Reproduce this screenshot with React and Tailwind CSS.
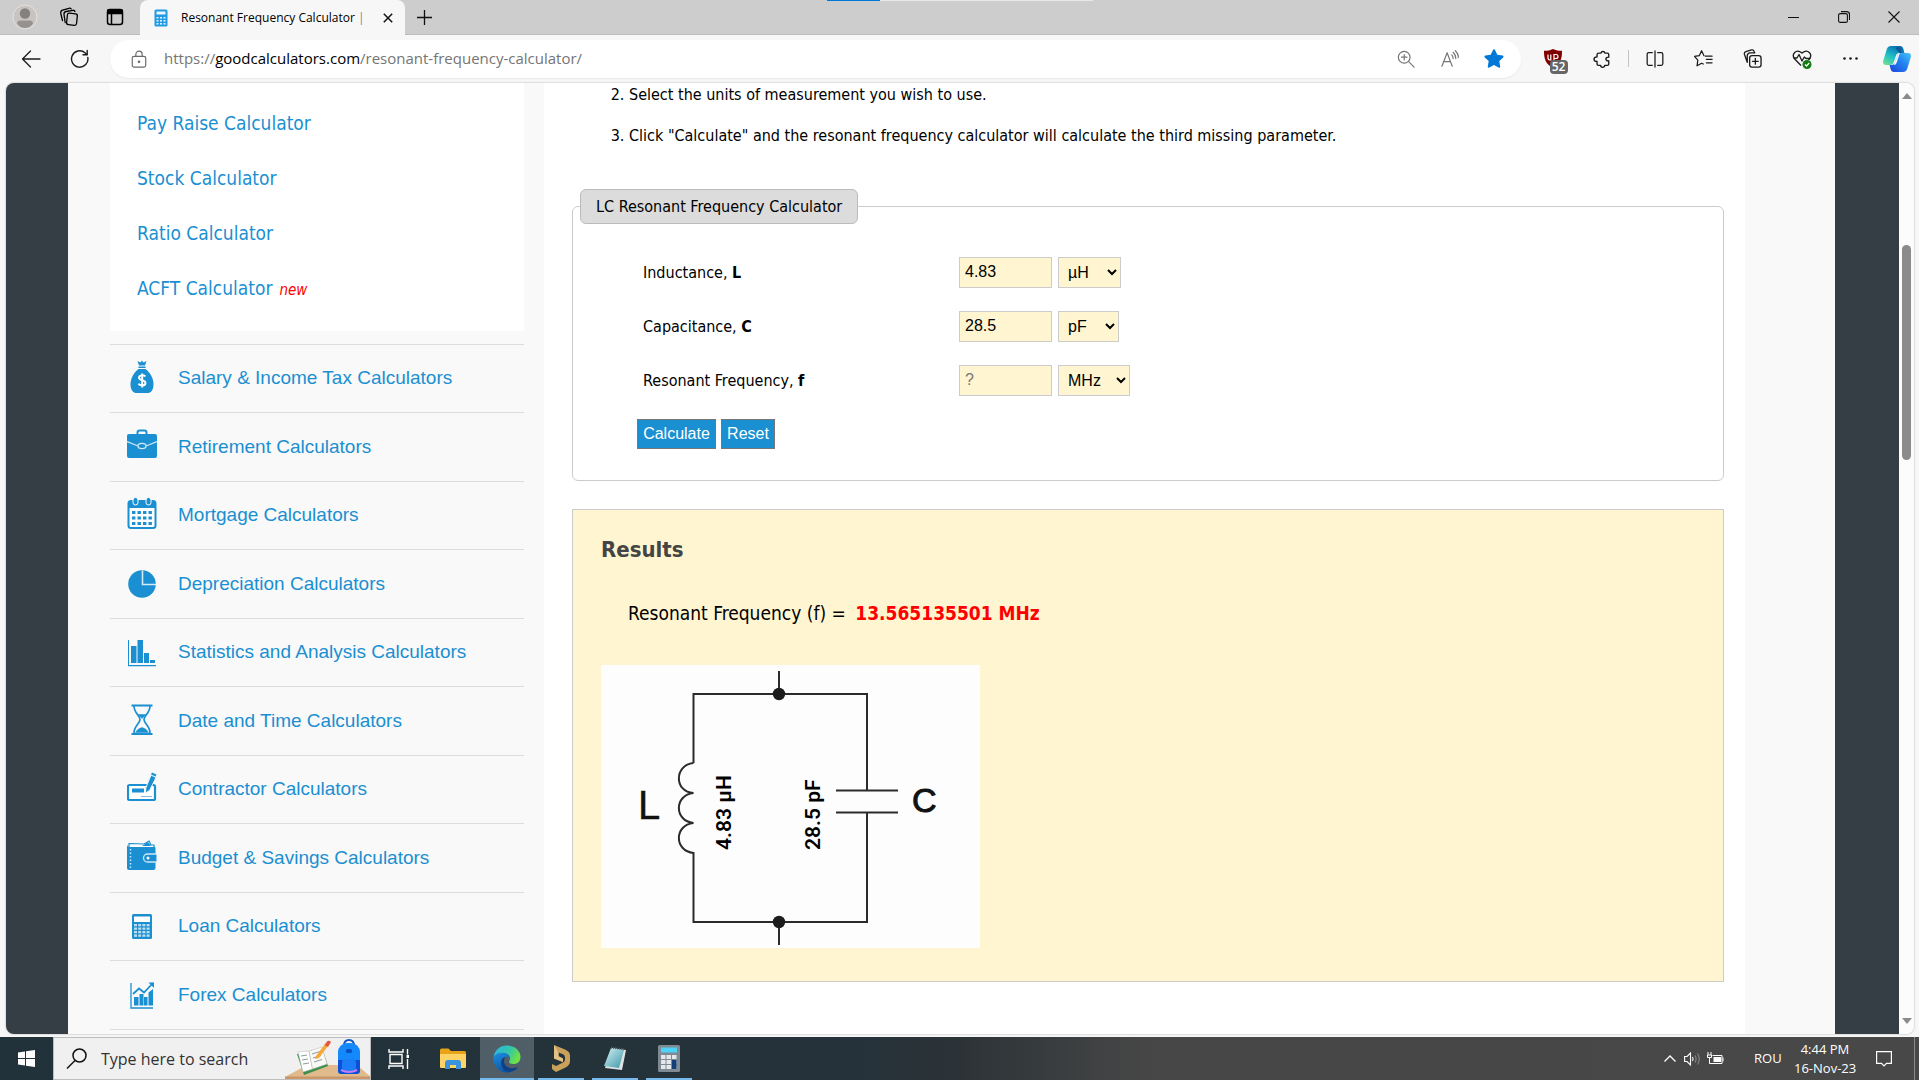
import React from "react";

const TAHOMA = "font-['DejaVu_Sans_Condensed','DejaVu_Sans',sans-serif]";
const ARIAL = "font-['Liberation_Sans',Arial,sans-serif]";
const SEGOE = "font-['Open_Sans','Noto_Sans',sans-serif]";

function Line({ size = 20, w = 1.3, children, className = "" }) {
  return (
    <svg width={size} height={size} viewBox="0 0 20 20" fill="none" stroke="currentColor" strokeWidth={w} strokeLinecap="round" strokeLinejoin="round" className={className} aria-hidden="true">
      {children}
    </svg>
  );
}

/* ---------- browser chrome ---------- */

function TabStrip() {
  return (
    <header className={`relative flex h-[35px] shrink-0 items-stretch bg-[#cdcdcd] text-black ${SEGOE}`}>
      <div className="absolute left-1/2 top-0 flex h-px w-[266px] -translate-x-1/2 bg-[#e8e8e8]">
        <div className="w-1/5 bg-[#0078d7]" />
      </div>
      <div className="flex w-[140px] shrink-0 items-center border-b border-[#bdbdbd]">
        <button aria-label="Profile" className="flex w-[49px] justify-center">
          <svg width="26" height="26" viewBox="0 0 26 26">
            <circle cx="13" cy="13" r="12" fill="#c8c4c1" stroke="#e6e4e2" />
            <circle cx="13" cy="9.5" r="5.2" fill="#858180" />
            <path d="M5 19.5c0-2 1.500-3 3.500-3h9c2 0 3.500 1 3.500 3-2 3-5 4.500-8 4.500s-6-1.500-8-4.500z" fill="#979290" />
          </svg>
        </button>
        <button aria-label="Workspaces" className="flex w-10 justify-center">
          <Line>
            <rect x="8" y="6.500" width="10" height="11.500" rx="2" transform="rotate(6 13 12)" />
            <path d="M6.200 15.500 5 7.500Q4.800 5 7 4.500l7-1.200q1.500-.2 2 1.200" />
            <path d="M3.500 13.500 1.800 6.500Q1.300 4 3.500 3.200L10 1.300q1.500-.4 2.200.7" />
          </Line>
        </button>
        <button aria-label="Tab actions" className="flex w-[51px] justify-center">
          <Line w={1.5}>
            <rect x="2.500" y="2.500" width="15" height="15" rx="2.500" />
            <path d="M3 3h14v3.500H3z" fill="currentColor" />
            <path d="M6.500 7v10" />
          </Line>
        </button>
      </div>
      <div className="flex w-[265px] shrink-0 items-center rounded-t-lg bg-[#f7f7f7] pl-[14px]">
        <svg width="14" height="18" viewBox="0 0 14 18" className="shrink-0">
          <rect x=".5" y=".5" width="13" height="17" rx="1.500" fill="#1e9be3" />
          <rect x="2.500" y="2.500" width="9" height="3" fill="#eaf6fd" />
          {[8, 11, 14].map((y) => [2.5, 6, 9.5].map((x) => <rect key={`${x}-${y}`} x={x} y={y} width="2" height="1.600" fill="#d9effb" />))}
        </svg>
        <span className="ml-[13px] w-[193px] overflow-hidden whitespace-nowrap text-[12px]">
          Resonant Frequency Calculator <span className="text-[#888]">|</span>
        </span>
        <button aria-label="Close tab" className="ml-1 flex w-5 justify-center">
          <svg width="10" height="10" viewBox="0 0 10 10" stroke="#111" strokeWidth="1.500"><path d="M.8.8l8.400 8.400M9.200.8.800 9.200" /></svg>
        </button>
      </div>
      <div className="flex flex-1 items-center justify-between border-b border-[#bdbdbd]">
        <button aria-label="New tab" className="ml-3 flex">
          <svg width="15" height="15" viewBox="0 0 15 15" stroke="#111" strokeWidth="1.300"><path d="M7.500 0v15M0 7.500h15" /></svg>
        </button>
        <div className="flex text-[#111]">
          <button aria-label="Minimize" className="flex w-[50px] items-center justify-center">
            <svg width="11" height="11" viewBox="0 0 11 11" stroke="currentColor"><path d="M0 5.500h11" /></svg>
          </button>
          <button aria-label="Restore" className="flex w-[51px] items-center justify-center">
            <svg width="12" height="12" viewBox="0 0 12 12" fill="none" stroke="currentColor" strokeWidth="1.100"><rect x=".6" y="2.600" width="8.800" height="8.800" rx="1.500" /><path d="M3 .6h5.500a3 3 0 0 1 3 3V9" /></svg>
          </button>
          <button aria-label="Close" className="flex w-[50px] items-center justify-center">
            <svg width="12" height="12" viewBox="0 0 12 12" stroke="currentColor" strokeWidth="1.100"><path d="M.5.5l11 11M11.500.5l-11 11" /></svg>
          </button>
        </div>
      </div>
    </header>
  );
}

function ToolButton({ label, children }) {
  return <button aria-label={label} className="flex h-8 w-[49px] shrink-0 items-center justify-center">{children}</button>;
}

function Toolbar() {
  return (
    <div className={`flex h-12 shrink-0 items-center bg-[#f7f7f7] pb-px text-[#1b1b1b] ${SEGOE}`}>
      <button aria-label="Back" className="flex w-[62px] justify-center">
        <Line w={1.3}><path d="M19 10H1.500M9.500 2 1.500 10l8 8" /></Line>
      </button>
      <button aria-label="Refresh" className="flex w-9 justify-center">
        <Line w={1.4}><path d="M17.800 8.500A8.200 8.200 0 1 1 15 3.700l2 1.800" /><path d="M17.200 1.500v4.200H13" /></Line>
      </button>
      <div className="ml-3 mr-[7px] flex h-[38px] flex-1 items-center rounded-full bg-white pr-[5px] shadow-[0_1px_2px_rgba(0,0,0,0.06)]">
        <Line size={18} w={1.3} className="ml-5 text-[#6b6b6b]">
          <rect x="2.500" y="7" width="15" height="12" rx="2" /><path d="M6.500 7V4.800a3.500 3.500 0 0 1 7 0V7" /><circle cx="10" cy="13" r=".8" fill="currentColor" />
        </Line>
        <div role="textbox" aria-label="Address" contentEditable suppressContentEditableWarning className="ml-4 flex-1 whitespace-nowrap text-[15px] text-[#757575] outline-none">
          https://<span className="text-black">goodcalculators.com</span>/resonant-frequency-calculator/
        </div>
        <button aria-label="Zoom" className="flex w-11 justify-center text-[#757575]">
          <Line size={18}><circle cx="8" cy="8" r="6.500" /><path d="M13 13l6 6M8 5v6M5 8h6" /></Line>
        </button>
        <button aria-label="Read aloud" className="flex w-11 justify-center text-[#757575]">
          <Line size={18}><path d="M1 18 6.800 3 12.500 18M3 13h7.500M12 5.500q1.500 1.800 1.500 4M13.500 2.500q3 3 3 7M16 .8q3.300 3.200 3.300 7.500" /></Line>
        </button>
        <button aria-label="Favorite" className="flex w-11 justify-center">
          <svg width="20" height="19" viewBox="0 0 20 19" fill="#0078d7"><path d="M10 .3c.5 0 .8.300 1 .7l2.300 4.700 5.300.8c1 .1 1.300 1.200.6 1.900l-3.900 3.700.9 5.300c.2.900-.8 1.600-1.600 1.200L10 16.100l-4.600 2.500c-.8.400-1.800-.3-1.600-1.200l.9-5.300L.8 8.400c-.7-.7-.4-1.800.6-1.900l5.300-.8L9 1c.2-.4.500-.7 1-.7z" /></svg>
        </button>
      </div>
      <ToolButton label="uBlock Origin">
        <span className="relative flex">
          <svg width="18" height="19" viewBox="0 0 18 19"><path d="M9 0c2.500 1.300 5.500 1.800 9 1.800C18 9 17 15 9 19 1 15 0 9 0 1.800 3.500 1.800 6.500 1.300 9 0z" fill="#800000" /><path d="M4 5.500v3.600c0 1.200.7 1.900 1.900 1.900h.9V5.500M10 11V5.500h2a2 2 0 0 1 2 2c0 1.200-.8 2-2 2h-1.500" fill="none" stroke="#fff" strokeWidth="1.200" /></svg>
          <span className="absolute left-1.5 top-[11px] h-[14px] w-[18px] rounded-sm bg-[#666] text-center text-[12px] font-semibold leading-[14px] text-white">52</span>
        </span>
      </ToolButton>
      <ToolButton label="Extensions">
        <Line size={18} w={1.5}><path d="M6.500 3.500h2.300a2.300 2.300 0 0 1 4.500 0H16q1.500 0 1.500 1.500v3c-4-.6-4.500 4.500 0 4v3.500q0 1.500-1.500 1.500h-3c0 3-4.500 3-4.500 0H6q-1.500 0-1.500-1.500v-2.800c-4.500 0-4.500-5 0-5V5q0-1.500 2-1.500z" /></Line>
      </ToolButton>
      <div className="w-1 shrink-0"><div className="mx-auto h-[17px] w-px bg-[#c4c4c4]" /></div>
      <ToolButton label="Split screen">
        <Line size={18} w={1.4}><path d="M10 1v18M7 3H3Q1.300 3 1.300 5v10q0 2 1.700 2h4M13 3h4q1.700 0 1.700 2v10q0 2-1.700 2h-4" /></Line>
      </ToolButton>
      <ToolButton label="Favorites">
        <Line size={19} w={1.3}><path d="M12 7.500h7M13 11h6M13 14.500h6M10.500 7 8 1.800 5.500 7l-5 .8L4 11.700l-.8 6L8 15l1.800.8" /></Line>
      </ToolButton>
      <ToolButton label="Collections">
        <Line size={19} w={1.4}><rect x="7" y="7" width="12" height="12" rx="2.500" /><path d="M13 10v6M10 13h6M4.500 14 1.500 5.500Q1 3.500 3 2.700L9 1q2-.5 2.700 1.500L12.300 4H7Q4.500 4.500 4.500 7z" /></Line>
      </ToolButton>
      <ToolButton label="Browser essentials">
        <svg width="20" height="20" viewBox="0 0 20 20" fill="none" stroke="currentColor" strokeWidth="1.300" strokeLinejoin="round">
          <path d="M9 16.500 2.700 10C-1 5.500 4-1 10 4c6-5 11 1.500 7.300 6L16.500 11" /><path d="M1.500 9H5l2-3.500 3 6.500 2.300-4L14 9.500h4.500" />
          <circle cx="15" cy="15.500" r="4.500" fill="#107c10" stroke="none" /><path d="m13 15.500 1.500 1.500 2.700-3" stroke="#fff" />
        </svg>
      </ToolButton>
      <ToolButton label="Settings and more">
        <svg width="15" height="3" viewBox="0 0 15 3" fill="currentColor"><circle cx="1.500" cy="1.500" r="1.300" /><circle cx="7.500" cy="1.500" r="1.300" /><circle cx="13.500" cy="1.500" r="1.300" /></svg>
      </ToolButton>
      <button aria-label="Copilot" className="flex w-11 shrink-0 justify-center">
        <svg width="28" height="26" viewBox="0 0 28 26">
          <defs>
            <linearGradient id="cpA" x1="0" y1="1" x2=".6" y2="0"><stop offset="0" stopColor="#7be38c" /><stop offset=".5" stopColor="#1ec0c8" /><stop offset="1" stopColor="#0a6fb5" /></linearGradient>
            <linearGradient id="cpB" x1="0" y1="1" x2="1" y2="0"><stop offset="0" stopColor="#1b44d8" /><stop offset=".6" stopColor="#2589f2" /><stop offset="1" stopColor="#48c6f5" /></linearGradient>
          </defs>
          <path d="M8 0h9c2 0 2.800 1 3.400 3l1 4h-5c-2 0-3 1-3.600 3l-2 6c-.6 2-1.800 3-3.800 3H3c-2.500 0-3.500-1.800-2.700-4.500l3.400-11C4.500 1.500 5.500 0 8 0z" fill="url(#cpA)" />
          <path d="M15 1c2 0 2.600 1 3 2.500L19 7h-2.500L13 3c-.5-1 .5-2 2-2z" fill="#0b4f86" opacity=".7" />
          <path d="M20 26h-9c-2 0-2.800-1-3.400-3l-1-4h1.900c2 0 3.200-1 3.800-3l2-6c.6-2 1.600-3 3.600-3H25c2.500 0 3.500 1.800 2.700 4.500l-3.400 11C23.500 24.500 22.500 26 20 26z" fill="url(#cpB)" />
          <path d="M13.500 12.500 15.300 8c.4-.8.800-1 1.500-1l-3.300 10c-.5 1.300-1.200 2-2.500 2z" fill="#fff" />
        </svg>
      </button>
    </div>
  );
}

/* ---------- sidebar ---------- */

const B = "#1a8fd1";
const icons = {
  salary: (
    <g fill={B}><path d="M10.500 2l3 1.500L15 1.500l1.500 2 3-1.500-1.500 4.500h-6z" /><rect x="11.500" y="7.500" width="7" height="1.500" /><path d="M11.500 10h7c5 4 8 9.500 8 15.500 0 6-3 8.500-6 8.500h-11c-3 0-6-2.500-6-8.500 0-6 3-11.500 8-15.500z" /><path d="M18.300 17.500c-.8-1.500-6.300-2-6.300 1.200 0 3.300 6.500 1.800 6.500 5.200 0 3.300-6 3-7 .8M15.200 14.500v14" fill="none" stroke="#fff" strokeWidth="1.900" /></g>
  ),
  retirement: (
    <g><path d="M10.500 8V5.500q0-2 2-2h5q2 0 2 2V8" fill="none" stroke={B} strokeWidth="2" /><rect x="0" y="7" width="30" height="24" rx="2" fill={B} /><path d="M0 14.500 11 19m8 0 11-4.500" stroke="#cfe8f7" strokeWidth="1.200" fill="none" /><ellipse cx="15" cy="19" rx="4" ry="2.600" fill={B} stroke="#cfe8f7" strokeWidth="1.300" /></g>
  ),
  mortgage: (
    <g><rect x="1.500" y="5" width="27" height="27" rx="2.500" fill="#fff" stroke={B} strokeWidth="2" /><path d="M1.500 5h27v7h-27z" fill={B} /><g fill={B} stroke="#fff" strokeWidth="1"><rect x="6" y="1.500" width="5" height="7.500" rx="2.500" /><rect x="19" y="1.500" width="5" height="7.500" rx="2.500" /></g>
      {[15, 20.5, 26].map((y) => [5, 10.5, 16, 21.5].map((x) => <rect key={`${x}-${y}`} x={x} y={y} width="3.400" height="3" fill={B} />))}</g>
  ),
  depreciation: (
    <g><circle cx="15" cy="20" r="13.800" fill={B} /><path d="M15.500 6.500V20.500H29" fill="none" stroke="#d6ebf8" strokeWidth="1.600" /></g>
  ),
  statistics: (
    <g fill={B} transform="translate(0 2)"><path d="M1 5h1v25h27v1.200H1z" /><rect x="4" y="11" width="5.500" height="17" /><rect x="10.500" y="5" width="5.500" height="23" /><rect x="17" y="18" width="5" height="10" /><rect x="23" y="25" width="5" height="3" /></g>
  ),
  date: (
    <g fill="none" stroke={B} strokeWidth="1.700"><path d="M4.500 4.500h21M4.500 33h21" strokeWidth="2.200" /><path d="M7 5c0 7 6 9.500 6 13.500s-6 6.500-6 13.500M23 5c0 7-6 9.500-6 13.500s6 6.500 6 13.500" /><path d="M11 13.500h8l-4 4zM8.500 31.500q2-4 6.500-5 4.500 1 6.500 5z" fill={B} strokeWidth=".5" /></g>
  ),
  contractor: (
    <g><rect x="1" y="15" width="27" height="15" rx="1.500" fill="#fff" stroke={B} strokeWidth="2.200" /><rect x="5" y="18.500" width="12" height="4" fill={B} /><path d="M14 26.500h11" stroke="#7fbfe2" /><path d="M24 5l5 2.500-6.500 13-4 2.500.3-5z" fill={B} stroke="#eaf5fb" /><path d="M24.500 3.500l4.500 2" stroke={B} strokeWidth="2.200" /></g>
  ),
  budget: (
    <g><path d="M2 5.500 17 6l5-3 2 4h3V10H2z" fill="#fff" stroke={B} strokeWidth="1.200" /><path d="M15 8l6-4 3 4z" fill={B} /><path d="M0 6q0 3 3 3h24.500q1 0 1 1v20q0 2-2 2H2q-2 0-2-2z" fill={B} /><path d="M3.500 11v19" stroke="#cfe8f7" strokeDasharray="1.500 2" strokeWidth="1.500" /><path d="M30 16h-9.500a4 4 0 0 0 0 8H30z" fill={B} stroke="#cfe8f7" strokeWidth="1.300" /><circle cx="21" cy="20" r="1.500" fill="#fff" /></g>
  ),
  loan: (
    <g transform="translate(0 1)"><rect x="5" y="6" width="20" height="25" rx="1.500" fill={B} /><rect x="7" y="8.500" width="16" height="5.500" fill="#fff" />
      {[16, 19.5, 23, 26.5].map((y) => [7, 11.2, 15.4, 19.6].map((x) => <rect key={`${x}-${y}`} x={x} y={y} width="3" height="2.300" fill="#b9dff3" />))}</g>
  ),
  forex: (
    <g transform="translate(0 2)"><path d="M4 6v25h22" fill="none" stroke={B} strokeWidth="1.300" /><g fill={B}><rect x="7" y="20" width="4.500" height="8.500" /><rect x="12.500" y="17" width="4" height="11.500" /><rect x="17" y="20" width="3.500" height="8.500" /><path d="M21.500 15.500 26 12v16.500h-4.500z" /></g><path d="M6 17l6-5.500 5 4L26 6" fill="none" stroke={B} strokeWidth="1.800" /><path d="M21.500 5.500H27V11z" fill={B} /></g>
  ),
};

const categories = [
  ["salary", "Salary & Income Tax Calculators"],
  ["retirement", "Retirement Calculators"],
  ["mortgage", "Mortgage Calculators"],
  ["depreciation", "Depreciation Calculators"],
  ["statistics", "Statistics and Analysis Calculators"],
  ["date", "Date and Time Calculators"],
  ["contractor", "Contractor Calculators"],
  ["budget", "Budget & Savings Calculators"],
  ["loan", "Loan Calculators"],
  ["forex", "Forex Calculators"],
];

function Sidebar() {
  return (
    <aside className="ml-[42px] w-[414px] shrink-0">
      <ul className={`bg-white pb-[15px] pl-[27px] pt-[13px] text-[19px] text-[#1a8fd1] ${TAHOMA}`}>
        {["Pay Raise Calculator", "Stock Calculator", "Ratio Calculator", "ACFT Calculator"].map((t) => (
          <li key={t} className="flex h-[55px] items-center">
            <a href="#">{t}</a>
            {t.startsWith("ACFT") && <em className="ml-[7px] pt-1 text-[15px] text-[#f00]">new</em>}
          </li>
        ))}
      </ul>
      <ul className={`mt-[13px] border-t border-[#ddd] text-[19px] text-[#1a8fd1] ${ARIAL}`}>
        {categories.map(([k, t]) => (
          <li key={k} className="flex h-[68px] items-center border-b border-[#ddd] even:h-[69px]">
            <a href="#" className="flex items-center">
              <svg width="30" height="36" viewBox="0 0 30 36" className="mb-1 ml-[17px] mr-[21px]" aria-hidden="true">{icons[k]}</svg>
              {t}
            </a>
          </li>
        ))}
      </ul>
    </aside>
  );
}

/* ---------- calculator ---------- */

const field = "border border-[#ccc] bg-[#fff5d1] text-black";

function Row({ id, label, sym, value, placeholder, unit, units, selectWidth }) {
  return (
    <div className="flex h-[54px] items-center">
      <label htmlFor={id} className="w-[316px] pt-0.5">{label}, <b>{sym}</b></label>
      <input id={id} defaultValue={value} placeholder={placeholder} className={`h-[31px] w-[93px] px-[5px] text-[16px] placeholder:text-[#777] ${ARIAL} ${field}`} />
      <select aria-label={`${label} unit`} defaultValue={unit} className={`ml-[6px] h-[31px] pl-[5px] text-[16px] ${ARIAL} ${field} ${selectWidth}`}>
        {units.map((u) => <option key={u}>{u}</option>)}
      </select>
    </div>
  );
}

function Circuit() {
  return (
    <svg width="379" height="283" viewBox="0 0 379 283" className="mt-[38px] block bg-[#fdfdfd]" role="img" aria-label="Parallel LC circuit">
      <g fill="none" stroke="#2b2b2b" strokeWidth="2">
        <path d="M178 6v23M178 257v23M92.500 98V29H266v96M266 148v109H92.500V187" />
        <path d="M92.500 98C73 100 73 127 92.500 128C73 130 73 156 92.500 158C73 160 73 186 92.500 188" />
        <path d="M235 125.500h62M235 147.500h62" />
      </g>
      <circle cx="178" cy="29" r="6.200" fill="#1c1c1c" />
      <circle cx="178" cy="257" r="6.200" fill="#1c1c1c" />
      <g fill="#111" fontFamily="Liberation Sans, Arial, sans-serif">
        <text x="37" y="154" fontSize="40" stroke="#111" strokeWidth=".4">L</text>
        <text x="311" y="147" fontSize="34" stroke="#111" strokeWidth="1">C</text>
      </g>
      <g fill="#000" fontFamily="Roboto, sans-serif" fontSize="21" fontWeight="600">
        <text transform="translate(130 185) rotate(-90)">4.83 µH</text>
        <text transform="translate(219 185) rotate(-90)">28.5 pF</text>
      </g>
    </svg>
  );
}

function Content() {
  const button = "h-[30px] border border-[#767676] bg-[#1a8fd1] text-[16px] text-white";
  return (
    <main className={`ml-5 mr-[90px] flex-1 bg-white pl-7 pr-[21px] text-[16px] leading-6 text-black ${TAHOMA}`}>
      <ol start={2} className="ml-[57px] list-decimal space-y-[17px]">
        <li>Select the units of measurement you wish to use.</li>
        <li>Click "Calculate" and the resonant frequency calculator will calculate the third missing parameter.</li>
      </ol>
      <form onSubmit={(e) => e.preventDefault()}>
        <fieldset className="mt-[41px] rounded-md border border-[#ccc] px-[7px] pb-[31px]">
          <legend className="h-[35px] rounded-md border border-[#bbb] bg-[#dcdcdc] px-[15px] leading-[34px]">LC Resonant Frequency Calculator</legend>
          <div className="pl-[63px] pt-[21px]">
            <Row id="l" label="Inductance" sym="L" value="4.83" unit="µH" units={["pH", "nH", "µH", "mH", "H"]} selectWidth="w-[63px]" />
            <Row id="c" label="Capacitance" sym="C" value="28.5" unit="pF" units={["pF", "nF", "µF", "mF", "F"]} selectWidth="w-[61px]" />
            <Row id="f" label="Resonant Frequency" sym="f" placeholder="?" unit="MHz" units={["Hz", "kHz", "MHz", "GHz"]} selectWidth="w-[72px]" />
          </div>
          <div className={`flex gap-[5px] pl-[57px] pt-3 ${ARIAL}`}>
            <button type="submit" className={`w-[79px] ${button}`}>Calculate</button>
            <button type="reset" className={`w-[54px] ${button}`}>Reset</button>
          </div>
        </fieldset>
      </form>
      <section className="mt-7 border border-[#ccc] bg-[#fff5d1] pb-[33px] pl-7 pt-[26px]">
        <h2 className="text-[22px] font-bold leading-7 text-[#444]">Results</h2>
        <p className="ml-[27px] mt-[35px] text-[19px] leading-7">Resonant Frequency (f) = <b className="ml-1 text-[#f00]">13.565135501 MHz</b></p>
        <Circuit />
      </section>
    </main>
  );
}

function Scrollbar() {
  return (
    <div className="flex w-[15px] shrink-0 flex-col items-center bg-[#fcfcfc] py-[10px]">
      <svg width="10" height="6" viewBox="0 0 10 6" fill="#8b8b8b"><path d="M5 0l5 6H0z" /></svg>
      <div className="mt-[146px] h-[215px] w-[9px] rounded-full bg-[#8b8b8b]" />
      <svg width="10" height="6" viewBox="0 0 10 6" fill="#8b8b8b" className="mt-auto"><path d="M5 6l5-6H0z" /></svg>
    </div>
  );
}

/* ---------- taskbar ---------- */

function Task({ label, active, running, children }) {
  return (
    <button aria-label={label} className={`relative flex w-[54px] items-center justify-center ${active ? "bg-[#505f67]" : ""}`}>
      {children}
      {running && <span className={`absolute bottom-0 h-0.5 bg-[#76b9ed] ${active ? "inset-x-0" : "inset-x-1"}`} />}
    </button>
  );
}

function Taskbar() {
  return (
    <footer className={`flex h-[43px] shrink-0 items-stretch bg-[linear-gradient(90deg,#21323a_0%,#26323a_45%,#2c3337_50%,#474747_60%,#484848_100%)] text-white ${SEGOE}`}>
      <button aria-label="Start" className="flex w-[53px] items-center justify-center">
        <svg width="17" height="17" viewBox="0 0 17 17" fill="#fff"><path d="M0 2.400 7 1.400V8H0zM8 1.200 17 0v8H8zM0 9h7v6.600l-7-1zM8 9h9v8l-9-1.200z" /></svg>
      </button>
      <label className="mr-px flex w-[318px] items-stretch overflow-hidden border border-[#bdbdbd] bg-[#f0f0f0] text-[#2b2b2b]">
        <svg width="22" height="22" viewBox="0 0 22 22" fill="none" stroke="#111" strokeWidth="1.500" className="ml-3 shrink-0 self-center"><circle cx="13.500" cy="7.500" r="6.500" /><path d="M9 12.500 1 20.500" /></svg>
        <input aria-label="Search" placeholder="Type here to search" className="ml-[13px] w-[184px] bg-transparent text-[16px] outline-none placeholder:text-[#333]" />
        <svg width="86" height="41" viewBox="0 0 86 41" className="shrink-0">
          <path d="M22 27h50l14 12v2H0v-2z" fill="#e0b98d" /><path d="M0 38.500h86V41H0z" fill="#c9976a" />
          <g>
            <path d="M12 16 37 10l6 18-24 9z" fill="#3b8f4a" /><path d="M13 14l11-1 3.500 18L18 34z" fill="#fff" stroke="#bbb" strokeWidth=".5" /><path d="M24 13l13-4 5 17-14.500 5z" fill="#f8f8f4" stroke="#bbb" strokeWidth=".5" />
            <path d="M16 18l6-1M17 22l6-1M18 26l6-1M27 16l8-2.500M28 20l8-2.500M29 24l8-2.500" stroke="#8d9aa0" strokeWidth="1" /><path d="M31 18 40 6l3 2-9 12-4 1z" fill="#f4a93a" /><path d="M39.500 7l3-4q2-1 3.500 1l-3 5z" fill="#e8543f" />
          </g>
          <path d="M59 8q0-6 5-6t5 6" fill="none" stroke="#1257c9" strokeWidth="2" />
          <rect x="53" y="5" width="22" height="31" rx="9" fill="#1389fb" /><path d="M53 22h22v11q0 3-3 3H56q-3 0-3-3z" fill="#0b52d8" /><rect x="57" y="21" width="14" height="12" rx="4" fill="#1b7cf5" /><path d="M56 32q8 4 16 0" stroke="#c77df2" strokeWidth="2" fill="none" /><rect x="61" y="11" width="6" height="4" rx="1.500" fill="#0a4fc4" />
        </svg>
      </label>
      <Task label="Task View">
        <svg width="22" height="20" viewBox="0 0 22 20" fill="none" stroke="#fff" strokeWidth="1.400"><path d="M1 0v3h14V0M1 20v-3h14v3M2 5.500h12v9H2zM19.500 0v5.500M19.500 10v10" /><rect x="18.500" y="6" width="2.500" height="3" fill="#fff" stroke="none" /></svg>
      </Task>
      <Task label="File Explorer">
        <svg width="26" height="21" viewBox="0 0 26 21"><path d="M0 2q0-1.500 1.500-1.500h7L11 3h13.500Q26 3 26 4.500V19H0z" fill="#e8a419" /><path d="M0 6h26v13q0 1-1 1H1q-1 0-1-1z" fill="#fdd365" /><path d="M5 21v-6q0-3 3-3h10q3 0 3 3v6h-5v-4h-6v4z" fill="#3b92dd" /></svg>
      </Task>
      <Task label="Microsoft Edge" active running>
        <svg width="28" height="28" viewBox="0 0 28 28">
          <defs>
            <linearGradient id="eg1" x1="0" y1="0" x2="1" y2=".4"><stop offset="0" stopColor="#2bb4ee" /><stop offset=".6" stopColor="#35c5a8" /><stop offset="1" stopColor="#6be04a" /></linearGradient>
            <linearGradient id="eg2" x1="0" y1="0" x2=".6" y2="1"><stop offset="0" stopColor="#1e8fe0" /><stop offset="1" stopColor="#0c4f9e" /></linearGradient>
          </defs>
          <path d="M.5 12.500C1.500 5 7 .5 14 .5c8 0 13.500 5.500 13.500 11.500 0 4.500-3 7-7 7-3 0-4.500-1-4.500-2s1-1.500 1-3.500c0-3-3-5.500-7.500-5.500-4 0-7.500 1.500-9 4.500z" fill="url(#eg1)" />
          <path d="M.5 13C2 9 6 7.800 9.500 7.800c4.500 0 7.500 2.700 7.500 5.700-1-1.500-2.500-2-4-1.500-3 1-4.500 4-3.500 7.500 1.500 5 7.500 7 14 3.500-2.500 3.200-6 4.500-9.500 4.500C6 27.500.5 21 .5 14z" fill="url(#eg2)" />
          <path d="M9.500 13.500c-2 3-2 8 2 11.500 4 2.500 9 1.500 12.500-1.500.8-.8.300-1.500-.7-1C18 24.500 11 22 11 16c0-1.500.5-3 1.500-4-1 0-2 .5-3 1.500z" fill="#0f3f86" />
        </svg>
      </Task>
      <Task label="Altium Designer" running>
        <svg width="20" height="27" viewBox="0 0 20 27"><path d="M3 0l11 4.500q5 2 5 6v5.500q0 4-4 6.200L5 27l-4-3v-5l4 2 7-3.500q2-1 2-3v-2q0-2.200-2-3.200L7.500 7.500v3.800L12 13.500v3.500L3 13.500z" fill="#c9a15a" /><path d="M3 0l4.500 7.500v3.800L12 13.500v3.500L3 13.500z" fill="#e1c385" /></svg>
      </Task>
      <Task label="Notepad" running>
        <svg width="26" height="26" viewBox="0 0 26 26"><defs><linearGradient id="np" x1="0" y1="0" x2="1" y2="1"><stop offset="0" stopColor="#d7f1f5" /><stop offset="1" stopColor="#3b97a8" /></linearGradient></defs><path d="M10 2l14 2-4 20-17-2z" fill="#dfe3e4" /><path d="M9 2l13 2-5 18-15-2z" fill="url(#np)" /><path d="M9 1.500l14 2" stroke="#555" strokeWidth="2" strokeDasharray="1 1" /></svg>
      </Task>
      <Task label="Calculator" running>
        <svg width="22" height="27" viewBox="0 0 22 27"><rect width="22" height="27" rx="1.500" fill="#7f8a92" /><rect x="3" y="2.500" width="16" height="5" fill="#4fd2f7" />
          {[10, 15, 20].map((y) => [3, 8.5, 14].map((x) => <rect key={`${x}-${y}`} x={x} y={y} width="4.500" height="4" fill="#e4e8ea" />))}
          <rect x="14" y="15" width="4.500" height="9" fill="#123f78" /></svg>
      </Task>
      <div className="ml-auto flex items-center">
        <button aria-label="Show hidden icons" className="mr-2">
          <svg width="12" height="7" viewBox="0 0 12 7" fill="none" stroke="#fff" strokeWidth="1.300"><path d="M.5 6.500 6 1l5.500 5.500" /></svg>
        </button>
        <svg width="17" height="14" viewBox="0 0 17 14" fill="none" stroke="#fff" strokeWidth="1.100" className="mr-[6px]"><path d="M.6 4.500h2.500L6.500 1v12L3 9.500H.6z" /><path d="M8.500 5q1.200 2 0 4" /><path d="M11 3.500q2.200 3.500 0 7M13.500 1.500q3.500 5.500 0 11" stroke="#888" /></svg>
        <svg width="17" height="13" viewBox="0 0 17 13" className="mr-[30px]"><path d="M5.500 3.500H15v8H4.500" stroke="#fff" fill="none" /><path d="M6.500 5H14v5H6.500z" fill="#fff" /><path d="M15.500 5.500h1v4h-1z" fill="#fff" /><path d="M1 0v3M4 0v3M.5 3h4v2.500h-4zM2.500 6v5.500H5" stroke="#fff" fill="none" /></svg>
        <span className="mr-3 w-7 text-[13px]">ROU</span>
        <time className="w-[62px] whitespace-nowrap text-center text-[13px] leading-[19px]">4:44 PM<br />16-Nov-23</time>
        <button aria-label="Notifications" className="ml-5 mr-[22px]">
          <svg width="16" height="16" viewBox="0 0 16 16" fill="none" stroke="#fff" strokeWidth="1.200"><path d="M.6.6h14.800v11.800H10.500L8 15l-2.500-2.600H.6z" /></svg>
        </button>
        <div className="h-[43px] w-[5px] border-l border-[#8a8a8a]" />
      </div>
    </footer>
  );
}

export default function App() {
  return (
    <div className="flex h-screen flex-col overflow-hidden bg-[#f7f7f7]">
      <TabStrip />
      <Toolbar />
      <div className="mb-[3px] ml-[6px] mr-[5px] flex min-h-0 flex-1 overflow-hidden rounded-lg shadow-[0_0_2px_rgba(0,0,0,0.35)]">
        <div className="w-[62px] shrink-0 bg-[#343e44]" />
        <div className="flex flex-1 bg-[#f9f9f9]">
          <Sidebar />
          <Content />
        </div>
        <div className="w-16 shrink-0 bg-[#343e44]" />
        <Scrollbar />
      </div>
      <Taskbar />
    </div>
  );
}
